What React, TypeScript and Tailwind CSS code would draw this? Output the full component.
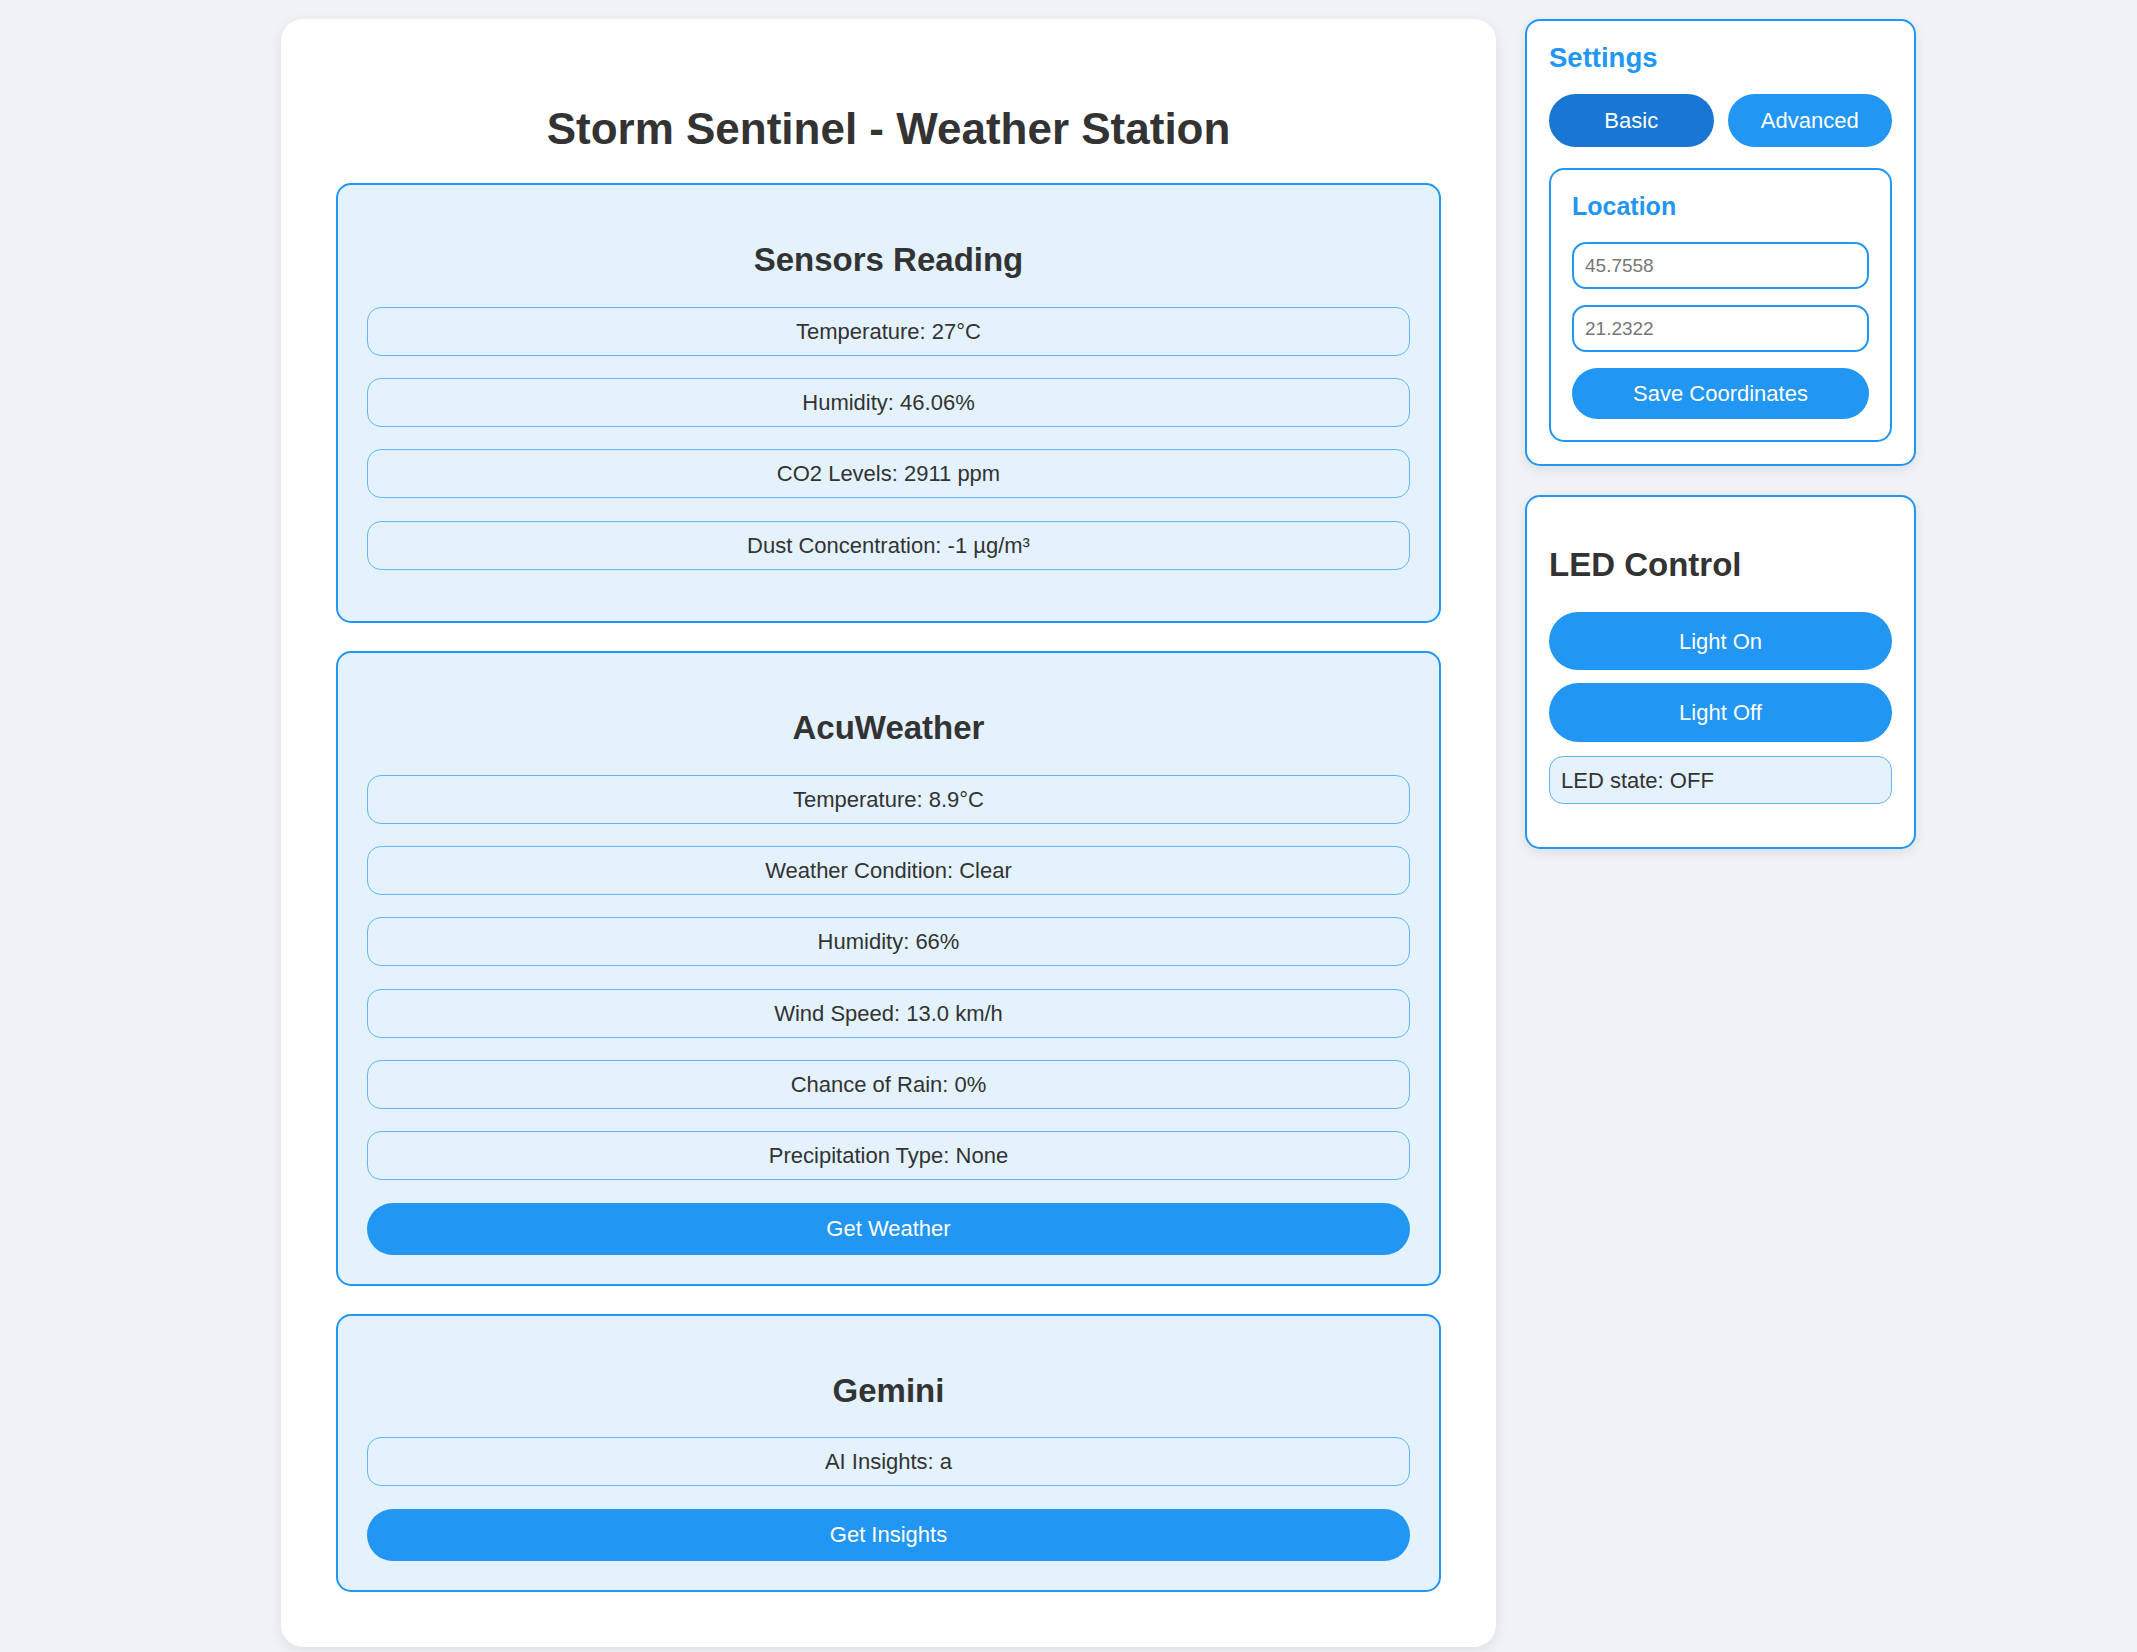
import React from 'react';

const sensors = [
  'Temperature: 27°C',
  'Humidity: 46.06%',
  'CO2 Levels: 2911 ppm',
  'Dust Concentration: -1 µg/m³',
];

const weather = [
  'Temperature: 8.9°C',
  'Weather Condition: Clear',
  'Humidity: 66%',
  'Wind Speed: 13.0 km/h',
  'Chance of Rain: 0%',
  'Precipitation Type: None',
];

function Row({ text }: { text: string }) {
  return (
    <div className="h-[49px] mb-[22.3px] flex items-center justify-center border border-[#64b5f6] rounded-[14px] bg-[#e3f2fd] text-[22px] text-[#333]">
      {text}
    </div>
  );
}

function Section({ title, rows, action, last }: { title: string; rows: string[]; action?: string; last?: boolean }) {
  return (
    <section className={`border-2 border-[#2196f3] bg-[#e3f2fd] rounded-[15px] p-[29px] ${last ? '' : 'mb-[28px]'}`}>
      <h2 className="text-[33px] leading-[38px] font-bold text-[#333] text-center my-[27.4px]">{title}</h2>
      {rows.map((r) => (
        <Row key={r} text={r} />
      ))}
      {action && (
        <button className="w-full h-[52px] rounded-full bg-[#2196f3] text-white text-[22px]">{action}</button>
      )}
    </section>
  );
}

export default function App() {
  return (
    <div
      className="min-h-screen bg-[#f0f2f5] flex items-start gap-[29px] pl-[281px] pt-[19px] pb-[6px]"
      style={{ fontFamily: '"Liberation Sans", Arial, sans-serif' }}
    >
      {/* Main panel */}
      <main className="w-[1215px] bg-white rounded-[22px] p-[55px] shadow-[0_4px_14px_rgba(0,0,0,0.08)]">
        <h1 className="text-[44px] leading-[51px] font-bold text-[#333] text-center mt-[29px] mb-[29px]">
          Storm Sentinel - Weather Station
        </h1>
        <Section title="Sensors Reading" rows={sensors} />
        <Section title="AcuWeather" rows={weather} action="Get Weather" />
        <Section title="Gemini" rows={['AI Insights: a']} action="Get Insights" last />
      </main>

      {/* Sidebar */}
      <aside className="w-[391px] flex flex-col gap-[29px]">
        <div className="bg-white border-2 border-[#2196f3] rounded-[15px] p-[22px] shadow-[0_4px_12px_rgba(0,0,0,0.08)]">
          <h3 className="text-[27.5px] leading-[32px] font-bold text-[#2196f3] -mt-[1px] mb-[20px]">Settings</h3>
          <div className="grid grid-cols-2 gap-[14px]">
            <button className="h-[53px] rounded-full bg-[#1976d2] text-white text-[22px]">Basic</button>
            <button className="h-[53px] rounded-full bg-[#2196f3] text-white text-[22px]">Advanced</button>
          </div>
          <div className="mt-[21px] border-2 border-[#2196f3] rounded-[15px] p-[21px]">
            <h4 className="text-[25px] leading-[29px] font-bold text-[#2196f3] mt-[1px] mb-[21px]">Location</h4>
            <input
              className="block w-full h-[47px] border-2 border-[#2196f3] rounded-[14px] px-[11px] text-[19px] text-[#333] placeholder:text-[#777] outline-none"
              placeholder="45.7558"
            />
            <input
              className="block w-full h-[47px] mt-[16px] border-2 border-[#2196f3] rounded-[14px] px-[11px] text-[19px] text-[#333] placeholder:text-[#777] outline-none"
              placeholder="21.2322"
            />
            <button className="w-full h-[51px] mt-[16px] rounded-full bg-[#2196f3] text-white text-[22px]">
              Save Coordinates
            </button>
          </div>
        </div>

        <div className="bg-white border-2 border-[#2196f3] rounded-[15px] p-[22px] shadow-[0_4px_12px_rgba(0,0,0,0.08)]">
          <h2 className="text-[33px] leading-[38px] font-bold text-[#333] mt-[27px] mb-[28px]">LED Control</h2>
          <button className="w-full h-[58px] mb-[13px] rounded-full bg-[#2196f3] text-white text-[22px]">Light On</button>
          <button className="w-full h-[59px] mb-[14px] rounded-full bg-[#2196f3] text-white text-[22px]">Light Off</button>
          <div className="h-[48px] mb-[21px] flex items-center pl-[11px] border border-[#64b5f6] rounded-[14px] bg-[#e3f2fd] text-[22px] text-[#333]">
            LED state: OFF
          </div>
        </div>
      </aside>
    </div>
  );
}
